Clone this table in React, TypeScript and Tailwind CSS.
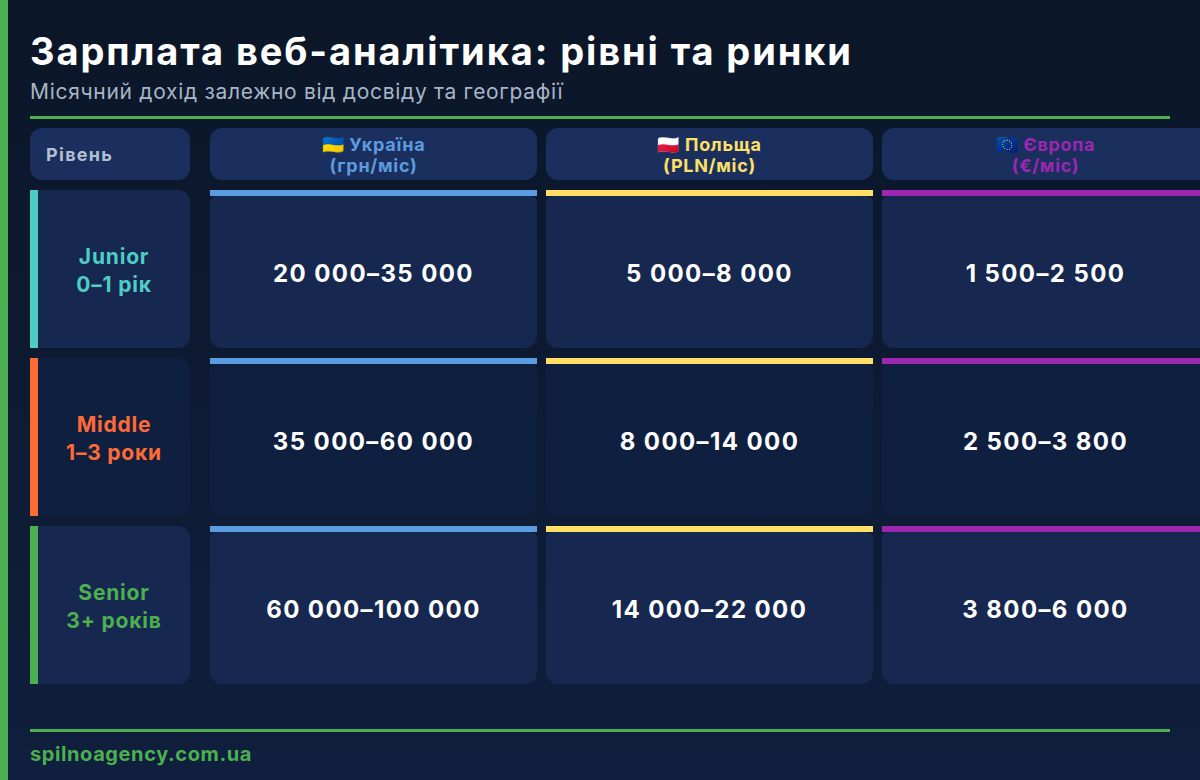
const markets = [
  { flag: '🇺🇦', name: 'Україна', unit: '(грн/міс)', color: 'text-[#5b9bdf]', bar: 'bg-[#5b9bdf]' },
  { flag: '🇵🇱', name: 'Польща', unit: '(PLN/міс)', color: 'text-[#ffe066]', bar: 'bg-[#ffe066]' },
  { flag: '🇪🇺', name: 'Європа', unit: '(€/міс)', color: 'text-[#9c27b0]', bar: 'bg-[#9c27b0]' },
]

const levels = [
  {
    title: 'Junior',
    years: '0–1 рік',
    text: 'text-[#4ecdc4]',
    edge: 'bg-[#4ecdc4]',
    card: 'bg-[#16284f]',
    values: ['20 000–35 000', '5 000–8 000', '1 500–2 500'],
  },
  {
    title: 'Middle',
    years: '1–3 роки',
    text: 'text-[#ff6b35]',
    edge: 'bg-[#ff6b35]',
    card: 'bg-[#0f1f40]',
    values: ['35 000–60 000', '8 000–14 000', '2 500–3 800'],
  },
  {
    title: 'Senior',
    years: '3+ років',
    text: 'text-[#4caf50]',
    edge: 'bg-[#4caf50]',
    card: 'bg-[#16284f]',
    values: ['60 000–100 000', '14 000–22 000', '3 800–6 000'],
  },
]

export default function App() {
  return (
    <div className="flex w-[1200px] h-[780px] overflow-hidden bg-gradient-to-b from-[#0b1628] to-[#0f1f3d] font-['Inter','Noto_Sans',sans-serif]">
      <div className="w-2 shrink-0 bg-[#4caf50]" />

      <div className="flex flex-col pl-[22px] pt-[28px] shrink-0">
        <h1 className="text-[38px] leading-[46px] font-bold text-white tracking-[1.9px] whitespace-nowrap">
          Зарплата веб-аналітика: рівні та ринки
        </h1>
        <p className="mt-[6px] text-[21px] leading-[24px] text-[#a9b5c6] tracking-[0.7px]">
          Місячний дохід залежно від досвіду та географії
        </p>
        <div className="mt-[12px] w-[1140px] h-[3px] bg-[#4caf50]" />

        <div className="mt-[9px] flex flex-col gap-[10px]">
          <div className="flex h-[52px]">
            <div className="w-[160px] shrink-0 mr-[20px] rounded-xl bg-[#1b2f5e] flex items-center pl-4 text-[18px] font-bold text-[#b3bfd3] tracking-[1.3px]">
              Рівень
            </div>
            <div className="flex gap-[9px]">
              {markets.map((m) => (
                <div
                  key={m.name}
                  className={`w-[327px] shrink-0 rounded-xl bg-[#1b2f5e] flex flex-col items-center justify-center pt-[2px] text-[18px] leading-[21px] font-bold tracking-[0.7px] ${m.color}`}
                >
                  <span>
                    {m.flag} {m.name}
                  </span>
                  <span>{m.unit}</span>
                </div>
              ))}
            </div>
          </div>

          {levels.map((lvl) => (
            <div key={lvl.title} className="flex h-[158px]">
              <div className={`w-[160px] shrink-0 mr-[20px] flex rounded-r-xl overflow-hidden ${lvl.card}`}>
                <div className={`w-2 shrink-0 ${lvl.edge}`} />
                <div className={`flex-1 flex flex-col items-center justify-center pt-[4px] text-[21px] leading-[28px] font-bold tracking-[0.8px] ${lvl.text}`}>
                  <span>{lvl.title}</span>
                  <span>{lvl.years}</span>
                </div>
              </div>
              <div className="flex gap-[9px]">
                {lvl.values.map((v, i) => (
                  <div key={v} className="w-[327px] shrink-0 flex flex-col">
                    <div className={`h-[6px] ${markets[i].bar}`} />
                    <div
                      className={`flex-1 rounded-b-xl rounded-t-md flex items-center justify-center pt-[4px] text-[24px] font-bold text-white tracking-[1.4px] ${lvl.card}`}
                    >
                      {v}
                    </div>
                  </div>
                ))}
              </div>
            </div>
          ))}
        </div>

        <div className="mt-[45px] w-[1140px] h-[3px] bg-[#4caf50]" />
        <div className="mt-[8px] text-[20px] leading-[28px] font-bold text-[#4caf50] tracking-[0.6px]">spilnoagency.com.ua</div>
      </div>
    </div>
  )
}
